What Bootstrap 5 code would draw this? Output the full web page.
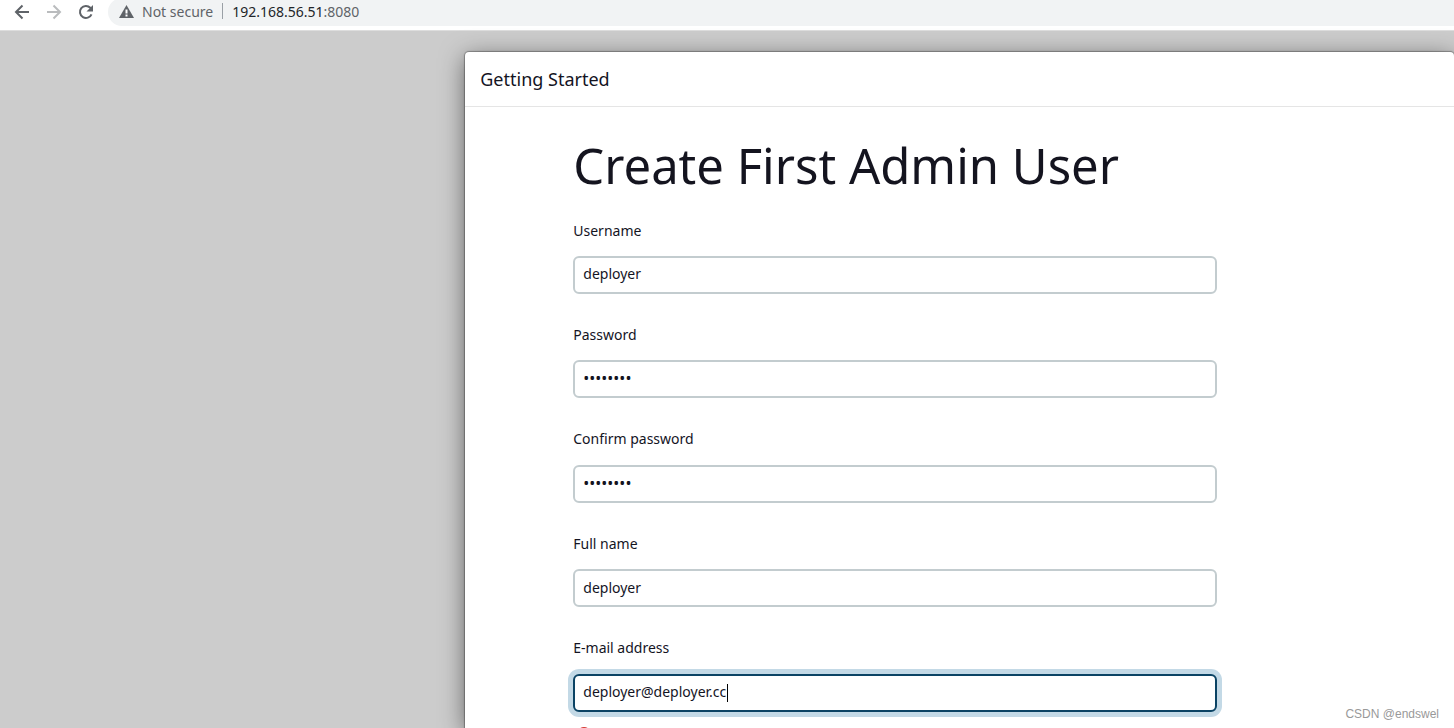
<!DOCTYPE html>
<html lang="en">
<head>
<meta charset="utf-8">
<meta name="viewport" content="width=device-width, initial-scale=1">
<title>Getting Started</title>
<link href="https://cdn.jsdelivr.net/npm/bootstrap@5.3.0/dist/css/bootstrap.min.css" rel="stylesheet">
<style>
  body { font-family: "Noto Sans", "Open Sans", sans-serif; font-size: 14px; line-height: 1.5; color: #14141f; background: #ccc; }
  .toolbar { height: 31px; border-bottom: 1px solid #ddd; color: #5f6368; padding-left: 14px; }
  .tool-btn { width: 16px; height: 24px; color: inherit; }
  .tool-btn:disabled { color: #babcbe; border: 0; opacity: 1; }
  .omnibox { height: 28px; margin: -2px 0 0 14px; padding: 0 0 2px 11px; background: #f1f3f4; border-radius: 14px 0 0 14px; }
  .omnibox .divider { width: 1px; height: 16px; background: #9aa0a6; margin: 0 9px; }
  .page-area { padding: 21px 0 0 32%; min-height: 0; }
  .dialog { background: #fff; border-radius: 4px 4px 0 0; box-shadow: 0 0 1px 1px rgba(0,0,0,.3), 0 5px 25px rgba(0,0,0,.5); }
  .dialog-head { height: 55px; padding: 0 15px; border-bottom: 1px solid #e5e5e5; }
  .dialog-head h2 { font-size: 18px; line-height: 24px; }
  .setup-form { width: 752px; padding: 24px 0 0 108px; }
  .setup-form h1 { font-size: 49px; line-height: 1.4; font-weight: 400; margin-bottom: 20px; }
  .field { margin-bottom: 30px; }
  .field label { display: block; line-height: 1.6; margin-bottom: 14px; }
  .field .form-control { height: 38px; padding: 0 8px 2px; font-size: 14px; color: #14141f; border: 2px solid #c3cccf; border-radius: 6px; box-shadow: none; }
  .field .form-control[type="password"] { font-size: 16px; }
  .field .form-control.active-input { border-color: #0b4364; box-shadow: 0 0 0 5px #c3d9e6; }
  .text-caret { left: 154px; top: 10px; width: 1px; height: 18px; background: #000; }
  .error-note { margin-top: 15px; padding-left: 4px; }
  .watermark { right: 15px; bottom: 5px; font: 12px/18px "Liberation Sans", sans-serif; color: #999; }
</style>
</head>
<body class="vh-100 overflow-hidden d-flex flex-column position-relative">
  <header class="toolbar bg-white d-flex align-items-start flex-shrink-0 overflow-hidden">
    <nav class="d-flex gap-3" aria-label="Browser">
      <button class="tool-btn btn p-0 border-0 d-flex align-items-center" type="button" aria-label="Back">
        <svg width="16" height="16" viewBox="0 0 16 16" fill="none" stroke="currentColor" stroke-width="2"><path d="M15 8H2.500M8.500 1.500L2 8l6.500 6.500"/></svg>
      </button>
      <button class="tool-btn btn p-0 border-0 d-flex align-items-center" type="button" aria-label="Forward" disabled>
        <svg width="16" height="16" viewBox="0 0 16 16" fill="none" stroke="currentColor" stroke-width="2"><path d="M1 8h12.500M7.500 1.500L14 8l-6.500 6.500"/></svg>
      </button>
      <button class="tool-btn btn p-0 border-0 d-flex align-items-center" type="button" aria-label="Reload">
        <svg width="16" height="16" viewBox="0 0 16 16"><path d="M13.500 10.300A6 6 0 1 1 12.300 3.800L14 5.500" fill="none" stroke="currentColor" stroke-width="2"/><path d="M15 1v6.500H8.500z" fill="currentColor"/></svg>
      </button>
    </nav>
    <div class="omnibox d-flex align-items-center flex-grow-1">
      <svg width="15" height="13" viewBox="0 0 15 13" aria-hidden="true"><path d="M7.500 0L15 13H0z" fill="#5f6368"/><path d="M6.500 4.500h2v4h-2zM6.500 9.500h2v2h-2z" fill="#fff"/></svg>
      <span class="ms-2">Not secure</span>
      <span class="divider"></span>
      <span role="textbox" aria-label="Address"><span class="text-dark">192.168.56.51</span>:8080</span>
    </div>
  </header>

  <main class="page-area flex-grow-1 d-flex">
    <section class="dialog flex-grow-1 overflow-hidden">
      <div class="dialog-head d-flex align-items-center">
        <h2 class="fw-normal m-0">Getting Started</h2>
      </div>
      <form class="setup-form mw-100" autocomplete="off">
        <h1>Create First Admin User</h1>
        <div class="field">
          <label for="username">Username</label>
          <input class="form-control" id="username" type="text" value="deployer">
        </div>
        <div class="field">
          <label for="password">Password</label>
          <input class="form-control" id="password" type="password" value="deployer">
        </div>
        <div class="field">
          <label for="confirm">Confirm password</label>
          <input class="form-control" id="confirm" type="password" value="deployer">
        </div>
        <div class="field">
          <label for="fullname">Full name</label>
          <input class="form-control" id="fullname" type="text" value="deployer">
        </div>
        <div class="field">
          <label for="email">E-mail address</label>
          <div class="position-relative">
            <input class="form-control active-input" id="email" type="text" value="deployer@deployer.cc">
            <span class="text-caret position-absolute"></span>
          </div>
          <div class="error-note">
            <svg class="d-block" width="14" height="14" viewBox="0 0 14 14" aria-hidden="true"><circle cx="7" cy="7" r="7" fill="#d33833"/><path d="M6 3h2v5H6zM6 9h2v2H6z" fill="#fff"/></svg>
          </div>
        </div>
      </form>
    </section>
  </main>
  <span class="watermark position-absolute">CSDN @endswel</span>
<script src="https://cdn.jsdelivr.net/npm/bootstrap@5.3.0/dist/js/bootstrap.bundle.min.js"></script>
</body>
</html>
